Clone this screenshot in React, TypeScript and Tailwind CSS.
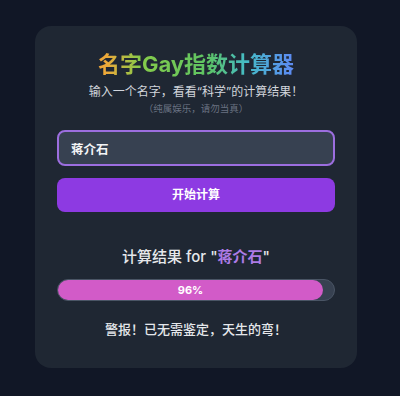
import { useState } from "react";

const font = {
  fontFamily: '"Inter", "Noto Sans CJK SC", "Noto Sans", sans-serif',
};

export default function App() {
  const [name, setName] = useState("蒋介石");
  const score = 96;

  return (
    <div
      className="min-h-[396px] w-[400px] bg-[#111726] pl-[35px] pt-[26px]"
      style={font}
    >
      <div className="flex w-[322px] flex-col rounded-2xl bg-[#1f2733] px-[22px] pt-[22px] pb-[29px]">
        <h1 className="bg-[linear-gradient(90deg,#f5982f_0%,#eca93a_18%,#86cc4a_30%,#5ec463_54%,#45bcc6_68%,#5a8ff0_83%,#8070f0_100%)] bg-clip-text text-center text-[22px] leading-8 font-bold text-transparent">
          名字Gay指数计算器
        </h1>
        <p className="mt-[2px] text-center text-[12px] leading-5 text-gray-300">
          输入一个名字，看看“科学”的计算结果！
        </p>
        <p className="text-center text-[9.5px] leading-[14px] text-gray-500">
          （纯属娱乐，请勿当真）
        </p>

        <input
          className="mt-[14px] h-9 w-full rounded-lg border-2 border-[#9c6edf] bg-[#374151] px-3 text-[12.5px] font-semibold text-gray-100 outline-none"
          value={name}
          onChange={(e) => setName(e.target.value)}
        />
        <button className="mt-3 h-[34px] w-full rounded-lg bg-[#8d3ae2] text-[12px] font-bold text-white">
          开始计算
        </button>

        <h2 className="mt-[33px] text-center text-[15px] leading-6 font-medium text-gray-200">
          计算结果 for "<span className="font-semibold text-[#ad7be6]">{name}</span>"
        </h2>
        <div className="mt-[10px] h-[22px] w-full rounded-full border border-gray-600 bg-[#374151]">
          <div
            className="flex h-full items-center justify-center rounded-full bg-[#d25bc8] text-[11px] font-bold text-white"
            style={{ width: `${score}%` }}
          >
            {score}%
          </div>
        </div>
        <p className="mt-[18px] text-center text-[13px] leading-5 font-medium text-gray-200">
          警报！已无需鉴定，天生的弯！
        </p>
      </div>
    </div>
  );
}
